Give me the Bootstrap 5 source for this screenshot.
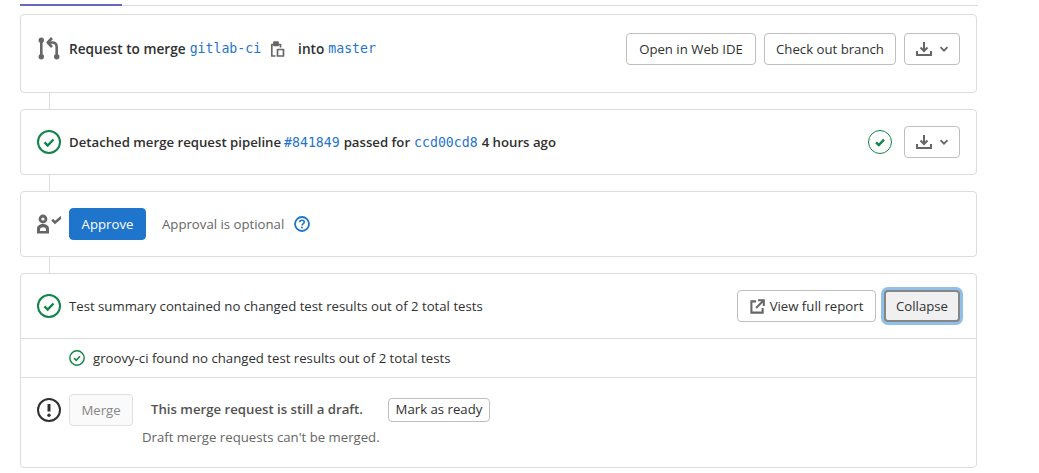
<!DOCTYPE html>
<html lang="en">
<head>
<meta charset="utf-8">
<title>Merge request</title>
<link href="https://cdn.jsdelivr.net/npm/bootstrap@5.3.0/dist/css/bootstrap.min.css" rel="stylesheet">
<style>
body{font-family:"Open Sans","Noto Sans",sans-serif;font-size:13.2px;color:#303030;background:#fff;overflow:hidden}
.mr-wrap{width:957px;margin-left:20px}
.tab-line{height:6px;border-bottom:1px solid #dcdcdc;margin-bottom:8px;width:958px;position:relative}
.tab-active{height:2px;width:102px;background:#6666c4;position:absolute;left:0;top:4px}
.wbox{border:1px solid #dcdcdc;border-radius:4px;background:#fff}
.wlink{width:1px;height:16px;background:#dcdcdc;margin-left:29px}
.box-a{height:79px;padding:0 16px}
.box-a .rowa{height:68px}
.box-b{height:66px;padding:0 16px}
.box-d{height:195px}
.sec-1{height:65px;padding:0 16px;border-bottom:1px solid #dcdcdc}
.sec-2{height:39px;padding-left:48px;border-bottom:1px solid #dcdcdc}
.sec-3{padding:16px 16px 0}
.ic{flex:none;display:block}
.ic-main{margin-right:8px}
.mono{font-family:"DejaVu Sans Mono","Liberation Mono",monospace;font-size:13.2px;color:#1f75cb}
.txt-b{font-weight:600;white-space:nowrap}
.req-t{font-size:13.65px}
.nudge{padding-top:2px}
.gap-s{margin-left:3px}
.gbtn{font-size:13.2px;line-height:20px;padding:5px 11px;border:1px solid #bfbfbf;border-radius:4px;background:#fff;color:#303030;white-space:nowrap;height:32px}
.gbtn-icon{width:56px;padding:0;display:flex;align-items:center;justify-content:center;gap:7px}
.gbtn-ide{width:130px;padding:5px 0;text-align:center}
.gbtn-co{width:132px;padding:5px 0;text-align:center}
.gbtn-rep{width:139px;padding:5px 0;justify-content:center}
.gbtn-go{background:#1f75cb;border-color:#1f75cb;color:#fff;width:77px;padding:5px 0;text-align:center}
.gbtn-focus{background:#f0f0f0;border:2px solid #868686;box-shadow:0 0 0 3px #92bfe8;width:76px;height:32px;padding:0;line-height:26px;text-align:center}
.gbtn-off{background:#fafafa;border-color:#e0e0e0;color:#868686;width:64px;padding:5px 0;text-align:center}
.gbtn-sm{padding:0 0 2px;width:102px;text-align:center;height:24px;line-height:20px;margin-left:25px}
.muted-t{color:#666;margin-left:16px}
.t-draft{color:#525252;font-weight:600;margin-left:18px}
.sub-t{color:#666;margin-left:105px;margin-top:1px;line-height:20px}
.pos-row{height:32px}
.help-ic{margin-left:10px}
.into-t{margin-left:12px}
.clip-ic{margin-left:9px}
.acts-b{gap:12px}
.acts-d{gap:8px}
.tog-ic{margin-right:5px}
</style>
</head>
<body>
<div class="mr-wrap">
  <div class="tab-line"><div class="tab-active"></div></div>

  <div class="wbox box-a">
    <div class="rowa d-flex align-items-center">
      <svg class="ic ic-main" width="24" height="24" viewBox="0 0 24 24" fill="none" stroke="#666" stroke-width="2.600" stroke-linejoin="round">
        <circle cx="4.300" cy="3.300" r="2.700" fill="#666" stroke="none"/><circle cx="4.300" cy="19.700" r="2.700" fill="#666" stroke="none"/><circle cx="19.700" cy="19.700" r="2.700" fill="#666" stroke="none"/>
        <path d="M4.300 4v15M19.700 19V10c0-3-1.700-4.500-4.700-4.500h-3"/><path d="M15 1 10.700 5.500 15 10"/>
      </svg>
      <span class="txt-b req-t">Request to merge</span>
      <span class="mono ms-1">gitlab-ci</span>
      <svg class="ic clip-ic" width="16" height="16" viewBox="0 0 16 16" fill="none" stroke="#666" stroke-width="1.700" stroke-linejoin="round">
        <path d="M5.500 15H1.800V3.500H4M8 3.500h2.500V6.500"/><rect x="4" y="1" width="4" height="3.500" fill="#666"/><rect x="7.500" y="8.500" width="6" height="6.500"/>
      </svg>
      <span class="txt-b into-t req-t">into</span>
      <span class="mono ms-1">master</span>
      <div class="ms-auto d-flex gap-2">
        <button class="gbtn gbtn-ide" type="button">Open in Web IDE</button>
        <button class="gbtn gbtn-co" type="button">Check out branch</button>
        <button class="gbtn gbtn-icon" type="button" aria-label="Download">
          <svg width="16" height="16" viewBox="0 0 16 16" fill="none" stroke="#666" stroke-width="2"><path d="M1 10v4h14v-4"/><path d="M8 1v8"/><path d="M4.500 6.500 8 10l3.500-3.500"/></svg>
          <svg width="10" height="10" viewBox="0 0 10 10" fill="none" stroke="#666" stroke-width="1.800"><path d="M1.500 3.200 5 6.700l3.500-3.500"/></svg>
        </button>
      </div>
    </div>
  </div>
  <div class="wlink"></div>

  <div class="wbox box-b d-flex align-items-center">
    <svg class="ic ic-main" width="24" height="24" viewBox="0 0 24 24" fill="none"><circle cx="12" cy="12" r="11" stroke="#108548" stroke-width="2"/><path d="M7.500 12.300 10.700 15.500 16.500 9.500" stroke="#108548" stroke-width="2.400"/></svg>
    <span class="txt-b nudge">Detached merge request pipeline</span>
    <span class="mono gap-s nudge">#841849</span>
    <span class="txt-b ms-1 nudge">passed for</span>
    <span class="mono ms-1 nudge">ccd00cd8</span>
    <span class="txt-b ms-1 nudge">4 hours ago</span>
    <div class="ms-auto d-flex align-items-center acts-b">
      <svg class="ic" width="24" height="24" viewBox="0 0 24 24" fill="none"><circle cx="12" cy="12" r="11.500" stroke="#108548" stroke-width="1"/><path d="M8 12.300 10.800 15 16 9.700" stroke="#108548" stroke-width="2.400"/></svg>
      <button class="gbtn gbtn-icon" type="button" aria-label="Download">
        <svg width="16" height="16" viewBox="0 0 16 16" fill="none" stroke="#666" stroke-width="2"><path d="M1 10v4h14v-4"/><path d="M8 1v8"/><path d="M4.500 6.500 8 10l3.500-3.500"/></svg>
        <svg width="10" height="10" viewBox="0 0 10 10" fill="none" stroke="#666" stroke-width="1.800"><path d="M1.500 3.200 5 6.700l3.500-3.500"/></svg>
      </button>
    </div>
  </div>
  <div class="wlink"></div>

  <div class="wbox box-b d-flex align-items-center">
    <svg class="ic ic-main" width="24" height="24" viewBox="0 0 24 24" fill="none">
      <circle cx="6" cy="7" r="3" stroke="#666" stroke-width="2.800"/>
      <path fill-rule="evenodd" fill="#666" d="M0 21.500V16.500C0 13.500 3 12 6 12s6 1.500 6 4.500V21.500ZM3 19H9V17.500C9 16 7.500 15.300 6 15.300S3 16 3 17.500Z"/>
      <path d="M15.200 7.800 18 10.400 24.500 5" stroke="#666" stroke-width="2.600"/>
    </svg>
    <button class="gbtn gbtn-go" type="button">Approve</button>
    <span class="muted-t nudge">Approval is optional</span>
    <svg class="ic help-ic" width="16" height="16" viewBox="0 0 16 16" fill="none"><circle cx="8" cy="8" r="7" stroke="#1f75cb" stroke-width="1.800"/><path d="M5.700 6.200C5.800 4.900 6.800 4.200 8 4.200c1.300 0 2.300.8 2.300 1.900 0 1.800-2.300 1.700-2.300 3.400" stroke="#1f75cb" stroke-width="1.600"/><circle cx="8" cy="11.600" r="1" fill="#1f75cb"/></svg>
  </div>
  <div class="wlink"></div>

  <div class="wbox box-d">
    <div class="sec-1 d-flex align-items-center">
      <svg class="ic ic-main" width="24" height="24" viewBox="0 0 24 24" fill="none"><circle cx="12" cy="12" r="11" stroke="#108548" stroke-width="2"/><path d="M7.500 12.300 10.700 15.500 16.500 9.500" stroke="#108548" stroke-width="2.400"/></svg>
      <span class="nudge">Test summary contained no changed test results out of 2 total tests</span>
      <div class="ms-auto d-flex align-items-center acts-d">
        <button class="gbtn gbtn-rep d-flex align-items-center" type="button">
          <svg class="tog-ic" width="15" height="15" viewBox="0 0 16 16" fill="none" stroke="#666" stroke-width="2.200"><path d="M6.500 2.500H1.500v12h12V9.500"/><path d="M6.500 9.500 14 2M8.500 1.300H14.700V7.500"/></svg>View full report</button>
        <button class="gbtn gbtn-focus" type="button">Collapse</button>
      </div>
    </div>
    <div class="sec-2 d-flex align-items-center">
      <svg class="ic me-2" width="16" height="16" viewBox="0 0 16 16" fill="none"><circle cx="8" cy="8" r="7.200" stroke="#108548" stroke-width="1.400"/><path d="M5 8.200 7.200 10.300 11 6.300" stroke="#108548" stroke-width="1.600"/></svg>
      <span class="nudge">groovy-ci found no changed test results out of 2 total tests</span>
    </div>
    <div class="sec-3">
      <div class="d-flex align-items-center pos-row">
        <svg class="ic ic-main" width="24" height="24" viewBox="0 0 24 24" fill="none"><circle cx="12" cy="12" r="11" stroke="#303030" stroke-width="2"/><path d="M12 6v7.500" stroke="#303030" stroke-width="3"/><circle cx="12" cy="17.300" r="1.700" fill="#303030"/></svg>
        <button class="gbtn gbtn-off" type="button" disabled>Merge</button>
        <span class="t-draft">This merge request is still a draft.</span>
        <button class="gbtn gbtn-sm" type="button">Mark as ready</button>
      </div>
      <div class="sub-t">Draft merge requests can't be merged.</div>
    </div>
  </div>
</div>
</body>
</html>
